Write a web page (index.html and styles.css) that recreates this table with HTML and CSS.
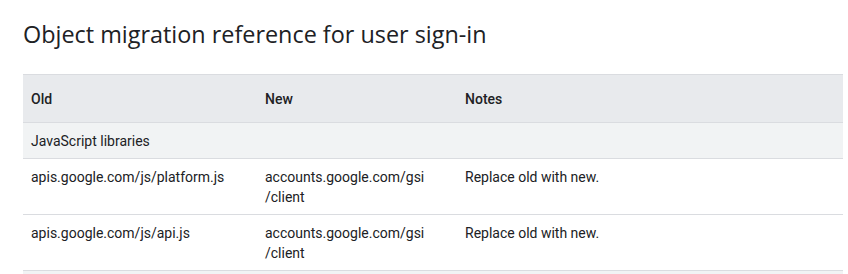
FILE: index.html
```html
<!DOCTYPE html>
<html lang="en">
<head>
    <meta charset="UTF-8">
    <meta name="viewport" content="width=device-width, initial-scale=1.0">
    <title>Object migration reference</title>
    <link rel="stylesheet" href="styles.css">
</head>
<body>
    <section class="migration">
        <h2 class="migration-title">Object migration reference for user sign-in</h2>

        <table class="ref-table">
            <thead>
                <tr>
                    <th class="col-old">Old</th>
                    <th class="col-new">New</th>
                    <th>Notes</th>
                </tr>
            </thead>
            <tbody>
                <tr class="group-row">
                    <td colspan="3">JavaScript libraries</td>
                </tr>
                <tr>
                    <td>apis.google.com/js/platform.js</td>
                    <td>accounts.google.com/gsi<br>/client</td>
                    <td>Replace old with new.</td>
                </tr>
                <tr>
                    <td>apis.google.com/js/api.js</td>
                    <td>accounts.google.com/gsi<br>/client</td>
                    <td>Replace old with new.</td>
                </tr>
                <tr class="group-row group-next">
                    <td colspan="3"></td>
                </tr>
            </tbody>
        </table>
    </section>
</body>
</html>
```

FILE: styles.css
```css
:root {
    --text: #202124;
    --head-bg: #e8eaed;
    --group-bg: #f1f3f4;
    --line: #dadce0;
}

* {
    margin: 0;
    padding: 0;
    box-sizing: border-box;
}

body {
    background: #fff;
    color: var(--text);
    font-family: Roboto, "Liberation Sans", sans-serif;
    font-size: 14px;
    line-height: 20px;
    padding: 0 5px 0 23px;
}

.migration-title {
    font-family: "Open Sans", Roboto, sans-serif;
    font-weight: 400;
    font-size: 23.4px;
    line-height: 32px;
    padding-top: 18px;
    margin-bottom: 24px;
}

.ref-table {
    width: 100%;
    border-collapse: collapse;
    table-layout: fixed;
}

.ref-table th,
.ref-table td {
    text-align: left;
    vertical-align: top;
    padding: 8px 8px 7px;
    border-bottom: 1px solid var(--line);
}

.ref-table thead th {
    background: var(--head-bg);
    font-weight: 500;
    padding: 14px 8px 13px;
    border-top: 1px solid var(--line);
}

.col-old {
    width: 234px;
}

.col-new {
    width: 200px;
}

.group-row td {
    background: var(--group-bg);
    padding: 8px 8px 7px;
}

.group-next td {
    height: 36px;
}
```
